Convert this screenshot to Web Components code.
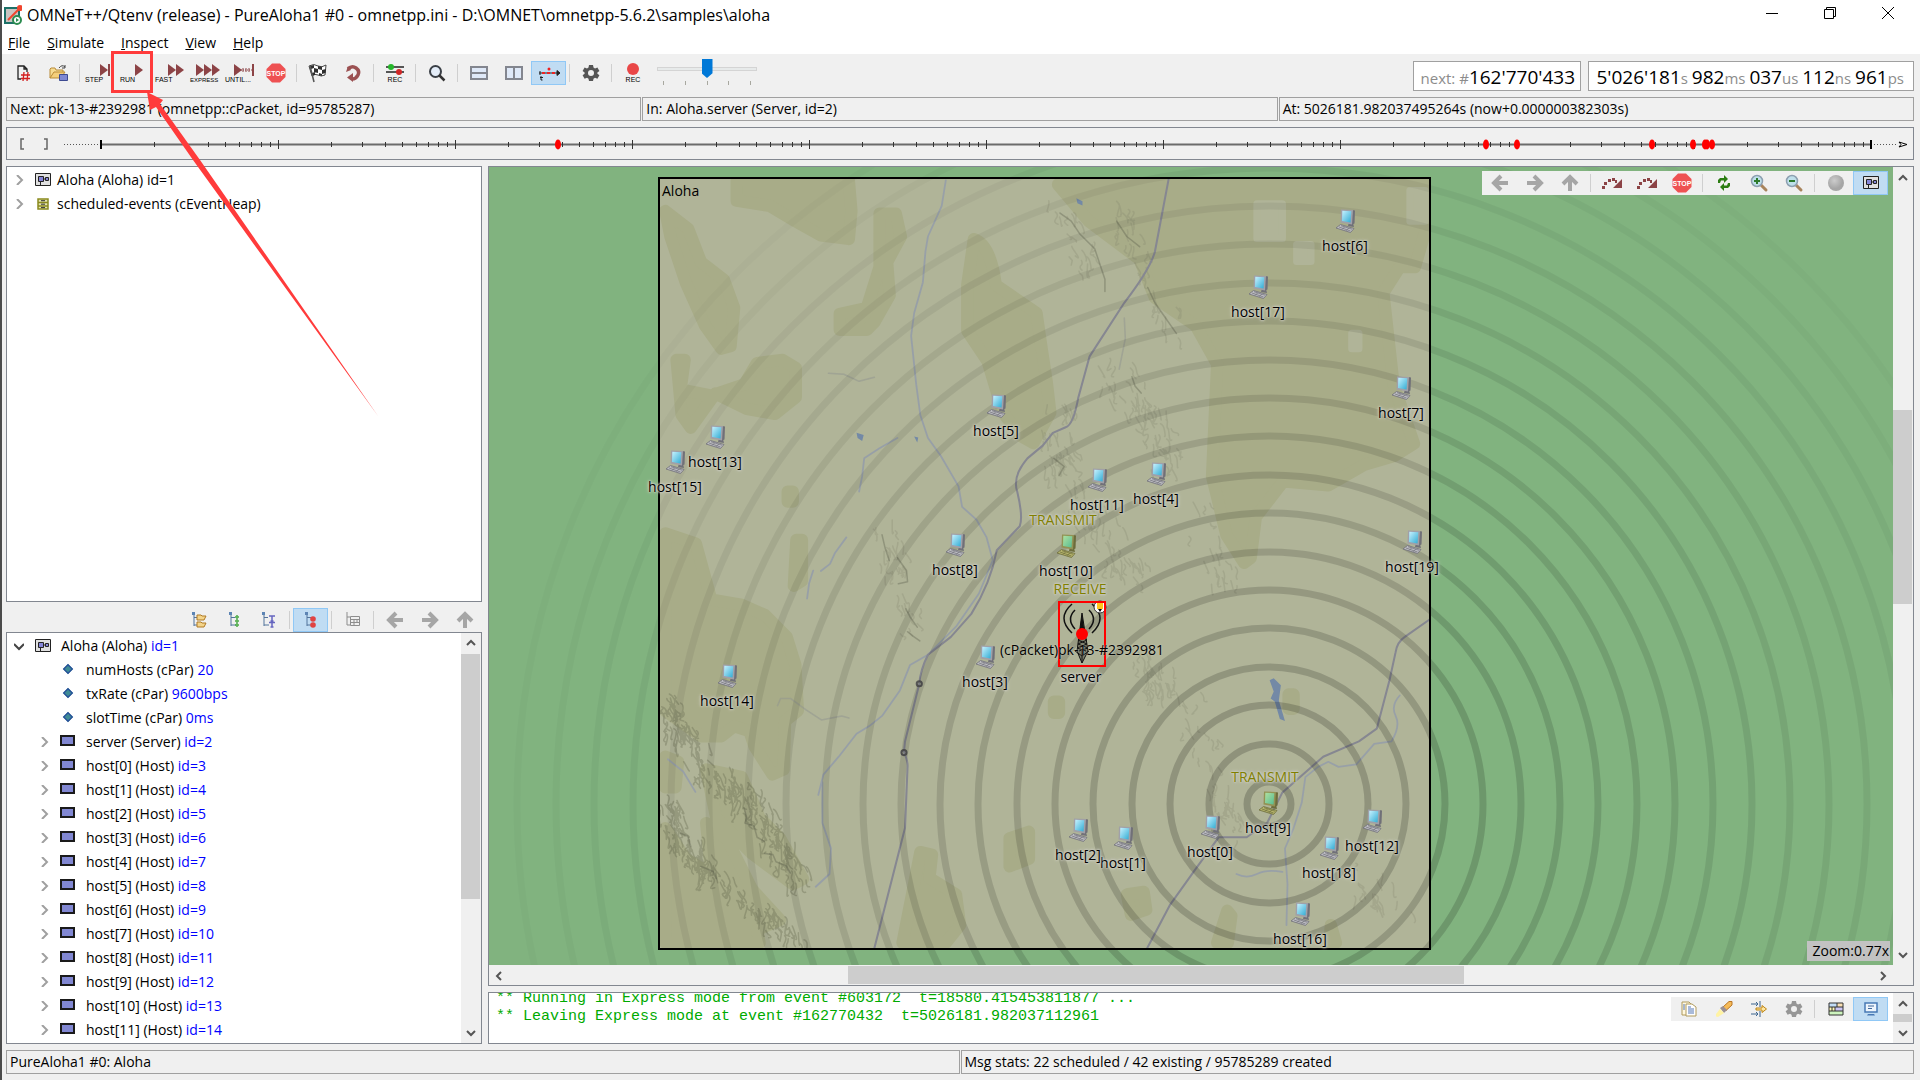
<!DOCTYPE html>
<html lang="en">
<head>
<meta charset="utf-8">
<title>OMNeT++/Qtenv (release) - PureAloha1 #0</title>
<style>
    html, body { margin: 0; height: 100% }
    body {
        font: 14px/20px "Open Sans", "Noto Sans", sans-serif;
        color: #000;
        background: #f0f0f0;
        overflow: hidden;
    }
</style>
</head>
<body>
<app-window>
    <title-bar slot="title">OMNeT++/Qtenv (release) - PureAloha1 #0 - omnetpp.ini - D:\OMNET\omnetpp-5.6.2\samples\aloha</title-bar>
    <menu-bar slot="menu" items="File,Simulate,Inspect,View,Help"></menu-bar>

    <tool-bar slot="toolbar" main>
        <tool-button icon="new" label="Set up a run"></tool-button>
        <tool-button icon="open" label="Load file"></tool-button>
        <tool-sep></tool-sep>
        <tool-button icon="step" label="Step"></tool-button>
        <tool-button icon="run" label="Run" marked></tool-button>
        <tool-button icon="fast" label="Fast run"></tool-button>
        <tool-button icon="express" label="Express run"></tool-button>
        <tool-button icon="until" label="Run until"></tool-button>
        <tool-button icon="stop" label="Stop"></tool-button>
        <tool-sep></tool-sep>
        <tool-button icon="flag" label="Conclude simulation"></tool-button>
        <tool-button icon="rebuild" label="Rebuild network"></tool-button>
        <tool-sep></tool-sep>
        <tool-button icon="eventlog" label="Eventlog recording"></tool-button>
        <tool-sep></tool-sep>
        <tool-button icon="find" label="Find objects"></tool-button>
        <tool-sep></tool-sep>
        <tool-button icon="rows" label="Horizontal layout"></tool-button>
        <tool-button icon="columns" label="Vertical layout"></tool-button>
        <tool-button icon="timeline" label="Show timeline" active></tool-button>
        <tool-sep></tool-sep>
        <tool-button icon="gear" label="Preferences"></tool-button>
        <tool-sep></tool-sep>
        <tool-button icon="record" label="Record video"></tool-button>
        <speed-slider></speed-slider>
    </tool-bar>
    <sim-clock slot="clocks" parts="next: #|162'770'433"></sim-clock>
    <sim-clock slot="clocks" wide parts="|5'026'181|s |982|ms |037|us |112|ns |961|ps"></sim-clock>

    <frame-label slot="info">Next: pk-13-#2392981 (omnetpp::cPacket, id=95785287)</frame-label>
    <frame-label slot="info">In: Aloha.server (Server, id=2)</frame-label>
    <frame-label slot="info">At: 5026181.982037495264s (now+0.000000382303s)</frame-label>

    <event-timeline slot="timeline"></event-timeline>

    <object-tree slot="objects" id="objects"></object-tree>
    <tool-bar slot="inspector-tools">
        <tool-button icon="tree-folders" label="Grouped mode"></tool-button>
        <tool-button icon="tree-flat" label="Flat mode"></tool-button>
        <tool-button icon="tree-types" label="Children mode"></tool-button>
        <tool-sep></tool-sep>
        <tool-button icon="tree-inherit" label="Inheritance mode" active></tool-button>
        <tool-sep></tool-sep>
        <tool-button icon="tree-table" label="Packet mode"></tool-button>
        <tool-sep></tool-sep>
        <tool-button icon="left" label="Back"></tool-button>
        <tool-button icon="right" label="Forward"></tool-button>
        <tool-button icon="up" label="Go to parent"></tool-button>
    </tool-bar>
    <object-tree slot="inspector" id="inspector" scroll="0,240,120"></object-tree>

    <net-canvas slot="canvas">
        <tool-bar slot="tools">
            <tool-button icon="left" label="Back"></tool-button>
            <tool-button icon="right" label="Forward"></tool-button>
            <tool-button icon="up" label="Go to parent"></tool-button>
            <tool-sep></tool-sep>
            <tool-button icon="hop" label="Run until next event"></tool-button>
            <tool-button icon="hop-fast" label="Fast run until next event"></tool-button>
            <tool-button icon="stop" label="Stop"></tool-button>
            <tool-sep></tool-sep>
            <tool-button icon="refresh" label="Re-layout"></tool-button>
            <tool-button icon="zoom-in" label="Zoom in"></tool-button>
            <tool-button icon="zoom-out" label="Zoom out"></tool-button>
            <tool-sep></tool-sep>
            <tool-button icon="sphere" label="3D view"></tool-button>
            <tool-button icon="module" label="Canvas view" active></tool-button>
        </tool-bar>
    </net-canvas>

    <log-pane slot="log">
        <span slot="text">** Running in Express mode from event #603172  t=18580.415453811877 ...</span>
        <span slot="text">** Leaving Express mode at event #162770432  t=5026181.982037112961</span>
        <tool-bar slot="tools">
            <tool-button icon="copy" label="Copy"></tool-button>
            <tool-button icon="torch" label="Find"></tool-button>
            <tool-button icon="filter" label="Filter"></tool-button>
            <tool-button icon="gear-light" label="Options"></tool-button>
            <tool-sep></tool-sep>
            <tool-button icon="messages" label="Show message view"></tool-button>
            <tool-button icon="monitor" label="Show log" active></tool-button>
        </tool-bar>
    </log-pane>

    <frame-label slot="status">PureAloha1 #0: Aloha</frame-label>
    <frame-label slot="status">Msg stats: 22 scheduled / 42 existing / 95785289 created</frame-label>
</app-window>

<script>
// **************************************************************************** helpers
let createElement = (tag, props = {}) => Object.assign(document.createElement(tag), props);
let shadow = (host, css, html = "") => {
    let root = host.attachShadow({ mode: "open" });
    root.innerHTML = `<style>*{box-sizing:border-box}${css}</style>${html}`;
    return root;
};
let svg = (w, h, body) => `<svg width="${w}" height="${h}" viewBox="0 0 ${w} ${h}" aria-hidden="true">${body}</svg>`;

// **************************************************************************** icons
let tri = (...xs) => xs.map(x => `<path d="M${x} 1l8 6-8 6z" fill="#8c4346"/>`).join("");
let caption = (text, size = 7) => `<text x="0" y="19" font-size="${size}" font-family="Liberation Sans,sans-serif">${text}</text>`;
let trunk = `<path d="M3 3v11M3 5.500h4M3 13h5" fill="none" stroke="#52749c"/><path d="M1 0h3v3H1z" fill="#5c84b4"/>`;
let gear = fill => svg(18, 18, `<path fill="${fill}" fill-rule="evenodd" d="M7 1h4l.5 2.500 1.500.9 2.400-.9 2 3.400-2 1.600v1.200l2 1.600-2 3.400-2.400-.9-1.500.9L11 17H7l-.5-2.300-1.500-.9-2.400.9-2-3.400 2-1.600V8.500l-2-1.600 2-3.400 2.400.9 1.500-.9zM9 6a3 3 0 1 0 0 6 3 3 0 0 0 0-6z"/>`);
let lens = sign => svg(18, 18, `<path d="M10 10l6 6" stroke="#a8845c" stroke-width="3" stroke-linecap="round"/><circle cx="7" cy="7" r="5.500" fill="#bfe0ea" stroke="#8d9fb0" stroke-width="1.500"/><path d="${sign}" stroke="#2c7a2c" stroke-width="2"/>`);
let moduleIcon = svg(16, 14, `<path d="M.5.500h15v12H.5z" fill="#e0e0e0" stroke="#222"/><path d="M3.500 3.500h5v5h-5zM10.500 4.500h3v3h-3zM8.500 6h2M5.500 8.500V12" fill="#8585d8" stroke="#222"/>`);
let hop = svg(22, 14, `<path d="M1 10h3v3H1zM3 6h3v3H3zM7 3h3v3H7zM11 2h3v3h-3zM14 4h2v3h-2zM21 3v9h-9z" fill="#8c4346"/>`);
let stop = svg(20, 20, `<path d="M6 .500h8l5.500 5.500v8L14 19.500H6L.500 14V6z" fill="#ee5152"/><text x="10" y="13" text-anchor="middle" font-size="7" font-weight="700" fill="#fff" font-family="Liberation Sans,sans-serif">STOP</text>`);
let navArrow = turn => svg(18, 18, `<path transform="rotate(${turn} 9 9)" d="M17 9H4M10 2L3 9l7 7" fill="none" stroke="#a6a6a6" stroke-width="4"/>`);
// screen, case and keyboard of a desktop machine
let desktop = (hi, lo, frame, side, keys) => svg(20, 24,
    `<defs><linearGradient id="s" x2="1" y2="1"><stop offset="0" stop-color="${hi}"/><stop offset="1" stop-color="${lo}"/></linearGradient></defs>
    <path d="M13 13l4 1 1 4-6-1z" fill="${side}"/>
    <path d="M16 1l3 .5-.5 13-2.500 1z" fill="${side}"/>
    <path d="M5 .500L17 1l-1 14.500L4.500 13.500z" fill="${frame}"/>
    <path d="M6.300 1.800l9 .4-.8 11.300-8.500-1.500z" fill="url(#s)"/>
    <path d="M0 19l4.500-3.500L18 19.500l-3.500 4z" fill="${keys}" stroke="${side}" stroke-width=".8"/>
    <path d="M3 18l11.500 4M5 16.700l11 3.500M6 20.500l3-3M10 21.800l3-3" stroke="${side}" stroke-width=".7"/>`);

const ICONS = {
    "new": svg(16, 18, `<path d="M5 15H2V2h6l3 3v3M8 2v3h3" fill="none" stroke="#222" stroke-width="1.300"/><path d="M8 8l-1 9M12 8l-1 9M5 11h9M5 14.500h9" stroke="#d21f1f" stroke-width="1.300"/>`),
    "open": svg(20, 18, `<path d="M1 14V5l1-1h4l1 2h7v3H6z" fill="#f6dc94" stroke="#b98b37"/><path d="M1 14L5 8h11l-4 6z" fill="#f4cf7b" stroke="#b98b37"/><path d="M10 4q3-4 6-1m0-2v3h-3" fill="none" stroke="#444"/><path d="M10.500 10.500h8v6h-8z" fill="#7f88d2" stroke="#3d4a91"/>`),
    "step": svg(32, 20, tri(15) + `<path d="M23 1h2v12h-2z" fill="#8c4346"/>` + caption("STEP")),
    "run": svg(32, 20, tri(15) + caption("RUN")),
    "fast": svg(32, 20, tri(13, 21) + caption("FAST")),
    "express": svg(32, 20, tri(6, 14, 22) + caption("EXPRESS", 6)),
    "until": svg(32, 20, tri(9) + `<path d="M16 7h13" stroke="#8c4346" stroke-dasharray="1 1"/><path d="M18 5v4M21 5v4M24 5v4" stroke="#8c4346"/><path d="M27 1h2v12h-2z" fill="#8c4346"/>` + caption("UNTIL...")),
    "stop": stop,
    "flag": svg(20, 20, `<path d="M1 3q5-3 9 0 4 2 8-1l-1 10q-4 2-7 0-4-2-6 1z" fill="#fff" stroke="#444"/><path d="M2 3l4-1v3l4 1V3l4 1v3l4-1-.5 4-3.500 1V7l-4-1v4l-4-1V5l-3 1zM4 10l3-1v3l-3 1zM11 10l3 1v2l-3-1z" fill="#2e2e2e"/><path d="M2 3l4 16" stroke="#555" stroke-width="1.500"/>`),
    "rebuild": svg(16, 18, `<path d="M3 5q4-4 8-1 4 3 2 7-2 4-6 4" fill="none" stroke="#9b5152" stroke-width="3.500"/><path d="M8 9v9l-6-4.500z" fill="#9b5152"/><path d="M1 8l2-6 3 4z" fill="#9b5152"/>`),
    "eventlog": svg(20, 20, `<path d="M1 4h18M1 9h18" stroke="#222" stroke-width="1.300"/><circle cx="6" cy="4" r="3" fill="#25b62a"/><circle cx="14" cy="9" r="3" fill="#d12626"/><text x="10" y="19" text-anchor="middle" font-size="7" font-family="Liberation Sans,sans-serif">REC</text>`),
    "find": svg(18, 18, `<circle cx="7.500" cy="7.500" r="5.500" fill="#e4edf8" stroke="#3a3f46" stroke-width="2"/><path d="M11 11l5.500 5.500" stroke="#333" stroke-width="2.500"/>`),
    "rows": svg(18, 14, `<path d="M1 1h16v12H1zM1 7h16" fill="#dfe9f8" stroke="#83868f" stroke-width="2"/>`),
    "columns": svg(18, 14, `<path d="M1 1h16v12H1zM9 1v12" fill="#dfe9f8" stroke="#83868f" stroke-width="2"/>`),
    "timeline": svg(22, 16, `<path d="M1 8h18M19 5.500v5l3-2.500zM2 6v4" stroke="#222" fill="#222"/><path d="M4 8h13" stroke="#e22" stroke-width="2" stroke-dasharray="3 2"/><circle cx="11" cy="4" r="1.500" fill="#e22"/><path d="M3 11v4h1.500M2 12.500h3" fill="none" stroke="#222"/>`),
    "gear": gear("#555"),
    "gear-light": gear("#969696"),
    "record": svg(20, 20, `<circle cx="10" cy="6" r="6" fill="#e94747"/><text x="10" y="19" text-anchor="middle" font-size="7" font-family="Liberation Sans,sans-serif">REC</text>`),
    "left": navArrow(0),
    "right": navArrow(180),
    "up": navArrow(90),
    "hop": hop,
    "hop-fast": hop,
    "refresh": svg(14, 16, `<path d="M1 8V5l2-2h4V0l4 4-4 4V5.500H4L3 8zM13 8v3l-2 2H7v3l-4-4 4-4v2.500h3L11 8z" fill="#2c7d12"/>`),
    "zoom-in": lens("M4 7h6M7 4v6"),
    "zoom-out": lens("M4 7h6"),
    "sphere": svg(18, 18, `<defs><radialGradient id="g" cx=".4" cy=".35"><stop offset="0" stop-color="#ccc"/><stop offset="1" stop-color="#a6a6a6"/></radialGradient></defs><circle cx="9" cy="9" r="8" fill="url(#g)"/>`),
    "module": moduleIcon,
    "queue": svg(12, 12, `<path d="M1 1h10v10H1zM1 4.500h10M1 8h10" fill="#e3e3b0" stroke="#8a8a1e" stroke-width="1.500"/><path d="M4 2.700h4M4 6.200h4M4 9.600h4" stroke="#333"/>`),
    "param": svg(10, 12, `<path d="M5 0l5 5-5 5-5-5z" fill="#3f8c96"/><path d="M5 .7L9.300 5 5 9.300.700 5z" fill="none" stroke="#27519a" stroke-width="1.300"/>`),
    "simple": svg(16, 14, `<path d="M1 1h13v9H1z" fill="#8187d2" stroke="#1a1a1a" stroke-width="2"/>`),
    "tree-folders": svg(16, 16, trunk + `<path d="M6 3h4l1 1h4l-2 4H6zM6 10h4l1 1h4l-2 4H6z" fill="#f4d48a" stroke="#b07a25"/>`),
    "tree-flat": svg(12, 16, trunk + `<g fill="#a6e09c" stroke="#2f9a2a"><circle cx="9" cy="5" r="1.300"/><circle cx="9" cy="9" r="1.300"/><circle cx="9" cy="13" r="1.300"/></g>`),
    "tree-types": svg(16, 16, trunk + `<path d="M8 4h6M11 4v5M9.500 9h3M8 10.500h6M11 11v4M9.500 15h3" stroke="#6666c0" stroke-width="1.500"/>`),
    "tree-inherit": svg(14, 16, trunk + `<circle cx="9" cy="7" r="2.800" fill="#e04242"/><circle cx="9" cy="13" r="2.800" fill="#e04242"/>`),
    "tree-table": svg(16, 16, `<path d="M2 0v13h3M2 5h3M5.500 4.500h9v9h-9zM5.500 7.500h9M5.500 10.500h9M9 7.500v6M12 7.500v3" fill="none" stroke="#8d8d8d"/>`),
    "copy": svg(16, 16, `<path d="M1 1h7l2 2v11H1z" fill="#fff8e0" stroke="#b09a5c"/><path d="M5 3h6l4 3v9H5z" fill="#fff" stroke="#b09a5c"/><path d="M7 6h3M7 8h6M7 10h6M7 12h6M2 4h2M2 6h2M2 8h2" stroke="#5577b5"/>`),
    "torch": svg(18, 16, `<path d="M8 6l6-5.500h3V4l-6 5.500z" fill="#f6bb58" stroke="#b97524"/><path d="M5 7l3-2 4 4-3 3z" fill="#9a9095"/><path d="M5 8l4 4-6 4-2-.5L1 13z" fill="#fff3a4"/>`),
    "filter": svg(18, 16, `<path d="M1 3h7M6 1l2 2-2 2M1 13h7M6 11l2 2-2 2M10 0v6M10 10v6" fill="none" stroke="#3d658e"/><path d="M6 7h6V4.500L16.500 8 12 11.500V9H6z" fill="#ffe7a0" stroke="#bd8312"/>`),
    "messages": svg(16, 14, `<path d="M1 1h8v4H1z" fill="#c2dcf5"/><path d="M9 1h6v4H9z" fill="#f8dfb4"/><path d="M1 5h6v4H1z" fill="#fff7b5"/><path d="M7 5h8v4H7z" fill="#cbc5f4"/><path d="M1 9h14v4H1z" fill="#cdf3bd"/><path d="M1 1h14v12H1zM1 5h14M1 9h14M9 1v4M7 5v4M4 5v4" fill="none" stroke="#333"/>`),
    "monitor": svg(14, 14, `<path d="M1 1h12v9H1z" fill="#eef5fc" stroke="#4879b5" stroke-width="1.500"/><path d="M4 4h6M4 6.500h4" stroke="#42689b"/><path d="M4 12h6l1 1.500H3z" fill="#4879b5"/>`),
    "host": desktop("#c8f2ff", "#2fabd3", "#a0a0a8", "#707078", "#bcbcc2"),
    "host-busy": desktop("#b0e0a0", "#56bd92", "#929254", "#6c6c3c", "#b5b46c"),
    "antenna": svg(48, 66, `<g fill="none" stroke="#111" stroke-width="1.500"><path d="M17 9q-9 9 0 19M14 3q-16 14 0 29M31 9q9 9 0 19M34 3q16 14 0 29"/></g><path d="M24 12l-5 38 5 12 6-12z" fill="#000" fill-opacity=".3"/><path d="M24 12l-5 38M24 12l6 38M21 34l8 5-9 4 10 4-9 3M27 34l-7 5 9 4-10 4 9 3M17 50l7 5 7-5M19 50l5 12 6-12M24 50v12" fill="none" stroke="#111"/><path d="M24 12l-3 22h6z" fill="#111"/><circle cx="42" cy="6" r="6" fill="#fff" stroke="#333"/><path d="M39 2h6v6h-6z" fill="#ffc61e"/><path d="M40 8h4l-2 3z"/><circle cx="24" cy="33" r="6" fill="red"/><path d="M1 1h46v64H1z" fill="none" stroke="red" stroke-width="2"/>`)
};

customElements.define("qt-icon", class extends HTMLElement {
    connectedCallback() {
        shadow(this, ":host{display:inline-flex;justify-content:center;align-items:center}svg{display:block;overflow:visible}",
            ICONS[this.getAttribute("name")]);
    }
});

// **************************************************************************** window frame
customElements.define("app-window", class extends HTMLElement {
    connectedCallback() {
        shadow(this,
            ":host{display:flex;flex-direction:column;gap:6px;height:100vh;padding-bottom:6px;border-left:2px solid #4b4b4b;box-sizing:border-box}" +
            "header{background:#fff;height:54px}" +
            ".tools{display:flex;justify-content:space-between;height:37px;padding:0 6px 0 4px;margin-top:-6px}" +
            ".clocks{display:flex;gap:7px;padding-top:7px}" +
            ".row{display:flex;gap:1px;margin:0 6px 0 4px}" +
            "::slotted(frame-label){flex:1}" +
            "::slotted(event-timeline){margin:0 6px 0 4px}" +
            "main{flex:1;min-height:0;display:grid;grid-template-columns:476px minmax(0,1fr);gap:6px;margin:0 6px 0 4px}" +
            "section{display:flex;flex-direction:column;min-height:0}" +
            ".views{gap:6px}" +
            '::slotted([slot="objects"]){flex:436 1 0;min-height:0}' +
            '::slotted([slot="inspector"]){flex:412 1 0;min-height:0}' +
            '::slotted([slot="inspector-tools"]){align-self:flex-end;height:30px;padding-top:6px}' +
            "::slotted(net-canvas){flex:1;min-height:0}",
            `<header><slot name="title"></slot><slot name="menu"></slot></header>
            <div class="tools"><slot name="toolbar"></slot><div class="clocks"><slot name="clocks"></slot></div></div>
            <div class="row"><slot name="info"></slot></div>
            <slot name="timeline"></slot>
            <main>
                <section><slot name="objects"></slot><slot name="inspector-tools"></slot><slot name="inspector"></slot></section>
                <section class="views"><slot name="canvas"></slot><slot name="log"></slot></section>
            </main>
            <div class="row"><slot name="status"></slot></div>
            <run-pointer></run-pointer>`);
    }
});

customElements.define("title-bar", class extends HTMLElement {
    connectedCallback() {
        let button = (label, d) => `<button aria-label="${label}">${svg(14, 14, `<path d="${d}" fill="none" stroke="#000"/>`)}</button>`;
        shadow(this,
            ":host{display:flex;align-items:center;gap:5px;height:29px;padding:0 3px 0 2px;font-size:16px}" +
            "span{flex:1;white-space:nowrap}" +
            "button{width:58px;height:28px;padding:0;border:0;background:none}",
            svg(18, 20, `<path d="M1 3h14v15H1z" fill="#c9c3c0" stroke="#1c7168" stroke-width="2"/><path d="M4 15l11-11" stroke="#f0452e" stroke-width="2"/><circle cx="16" cy="3" r="3" fill="#f0452e"/><circle cx="13" cy="15" r="4" fill="#fff" stroke="#2c8c50" stroke-width="2"/><path d="M12 13l3 2-3 2z" fill="#2c8c50"/>`) +
            "<span><slot></slot></span><div>" +
            button("Minimize", "M1 7.500h12") +
            button("Restore", "M1.500 3.500h9v9h-9zM3.500 3.500v-2h9v9h-2") +
            button("Close", "M1 1l12 12M13 1L1 13") + "</div>");
    }
});

customElements.define("menu-bar", class extends HTMLElement {
    connectedCallback() {
        shadow(this,
            ":host{display:flex;gap:17px;height:25px;padding:2px 0 0 6px;box-sizing:border-box}" +
            "button{padding:2px 0;border:0;background:none;font:inherit}",
            this.getAttribute("items").split(",").map(s => `<button><u>${s[0]}</u>${s.slice(1)}</button>`).join(""));
    }
});

// **************************************************************************** toolbars
customElements.define("tool-bar", class extends HTMLElement {
    connectedCallback() {
        shadow(this,
            ":host{display:flex;align-items:flex-start;background:#f0f0f0;height:24px;box-sizing:border-box}" +
            ":host([main]){height:37px;padding-top:7px}",
            "<slot></slot>");
        this.setAttribute("role", "toolbar");
    }
});

customElements.define("tool-sep", class extends HTMLElement {
    connectedCallback() {
        shadow(this, ":host{width:1px;height:18px;margin:3px;background:#cfcfcf}");
    }
});

customElements.define("tool-button", class extends HTMLElement {
    connectedCallback() {
        shadow(this,
            ":host{display:block;position:relative}" +
            "button{display:flex;align-items:center;justify-content:center;width:35px;height:24px;padding:0;border:1px solid transparent;background:none}" +
            ":host([active]) button{background:#c0dcf3;border-color:#90c8f6}" +
            // highlight frame drawn over the button
            ":host([marked])::after{content:'';position:absolute;left:-7px;top:-10px;width:42px;height:42px;box-sizing:border-box;border:3px solid #ff3b3b;z-index:2}",
            `<button aria-label="${this.getAttribute("label")}"><qt-icon name="${this.getAttribute("icon")}"></qt-icon></button>`);
    }
});

customElements.define("speed-slider", class extends HTMLElement {
    connectedCallback() {
        shadow(this,
            ":host{display:flex;flex-direction:column;width:107px;padding-left:7px;margin-top:-2px;box-sizing:border-box}" +
            "input{appearance:none;-webkit-appearance:none;width:100px;height:20px;margin:0;background:none}" +
            "input::-webkit-slider-runnable-track{height:4px;background:#e7eaea;border:1px solid #d4d4d4}" +
            "input::-webkit-slider-thumb{-webkit-appearance:none;width:11px;height:19px;margin-top:-9px;background:#0078d7;clip-path:polygon(0 0,100% 0,100% 75%,50% 100%,0 75%)}" +
            "div{display:flex;justify-content:space-between;padding:2px 6px}" +
            "i{width:1px;height:4px;background:#a8a8a0}",
            `<input type="range" min="0" max="100" value="50" aria-label="Animation speed"><div><i></i><i></i><i></i><i></i><i></i></div>`);
    }
});

customElements.define("sim-clock", class extends HTMLElement {
    connectedCallback() {
        // even parts are gray units, odd parts are the digits
        let parts = this.getAttribute("parts").split("|");
        shadow(this,
            ":host{display:flex;align-items:center;justify-content:flex-end;height:30px;padding:2px 5px 0;background:#fff;border:1px solid #a0a0a0;box-sizing:border-box;min-width:168px}" +
            ":host([wide]){min-width:326px;padding-right:9px}" +
            "output{font-size:19px;line-height:26px;white-space:pre}" +
            "small{font-size:15px;color:#8c8c8c}",
            `<output>${parts.map((s, i) => i % 2 ? s : s && `<small>${s}</small>`).join("")}</output>`);
    }
});

customElements.define("frame-label", class extends HTMLElement {
    connectedCallback() {
        shadow(this,
            ":host{display:block;height:24px;padding:1px 3px;border:1px solid #a0a0a0;box-sizing:border-box;white-space:nowrap;overflow:hidden}",
            "<slot></slot>");
    }
});

// **************************************************************************** <event-timeline>
customElements.define("event-timeline", class extends HTMLElement {
    connectedCallback() {
        let start = 94, decade = 177, count = 10, end = start + decade * count;
        let events = [551, 1479, 1510, 1645, 1686, 1698, 1700, 1705];
        let ticks = "";
        for (let d = 0; d < count; d++)
            for (let n = 1; n < 10; n++) {
                let x = Math.round(start + decade * (d + Math.log10(n)));
                ticks += n == 1 ? `M${x}.500 12v9` : `M${x}.500 14v5`;
            }
        shadow(this,
            ":host{display:block;height:33px;border:1px solid #828790;box-sizing:border-box}svg{display:block}",
            `<svg width="100%" height="31" viewBox="0 0 1906 31" aria-label="Timeline">
                <path d="M17 11h-3v10h3M37 11h3v10h-3" fill="none" stroke="#666" stroke-width="1.500"/>
                <path d="M57 16.500H${start}M${end} 16.500h27" stroke="#555" stroke-dasharray="1 2"/>
                <path d="M${start} 16.500H${end}" stroke="#6b6b6b" stroke-width="2"/>
                <path d="${ticks}" stroke="#333"/>
                <path d="M${start} 12v9M${end} 12v9" stroke="#000" stroke-width="2"/>
                <path d="M${end + 28} 14l8 2.500-8 2.500 2-2.500z" fill="#fff" stroke="#000"/>
                ${events.map(x => `<ellipse cx="${x}" cy="16.500" rx="3" ry="5" fill="red"/>`).join("")}
            </svg>`);
    }
});

// **************************************************************************** <scroll-bar>
customElements.define("scroll-bar", class extends HTMLElement {
    connectedCallback() {
        // before,thumb,after lengths as flex weights
        let [a, b, c] = (this.getAttribute("parts") || "1,1,1").split(",");
        let button = (label, turn) => `<button aria-label="${label}">${svg(10, 10, `<path transform="rotate(${turn} 5 5)" d="M1 7l4-4 4 4" fill="none" stroke="#555" stroke-width="2"/>`)}</button>`;
        let row = this.hasAttribute("horizontal");
        shadow(this,
            `:host{display:flex;flex-direction:${row ? "row" : "column"};${row ? "height" : "width"}:20px;background:#f0f0f0;box-sizing:border-box}` +
            "button{flex:none;display:grid;place-items:center;width:20px;height:21px;padding:0;border:0;background:none}" +
            `i{flex:${a} 1 0}b{flex:${b} 1 0;background:#cdcdcd;margin:${row ? "1px 0" : "0 1px 0 0"}}u{flex:${c} 1 0}`,
            button("Scroll back", row ? -90 : 0) + "<i></i><b></b><u></u>" + button("Scroll on", row ? 90 : 180));
    }
});

// **************************************************************************** <object-tree>
customElements.define("object-tree", class extends HTMLElement {
    set rows(rows) {
        this.list.replaceChildren(...rows.map(([level, state, icon, text, value = ""]) => {
            let arrow = state == "leaf" ? "" : `<button aria-label="Toggle">${svg(10, 10,
                `<path d="${state == "open" ? "M0 3l5 5 5-5" : "M3 0l5 5-5 5"}" fill="none" stroke="${state == "open" ? "#444" : "#a0a0a0"}" stroke-width="2"/>`)}</button>`;
            return createElement("li", {
                className: "level" + level,
                innerHTML: `<span class="arrow">${arrow}</span><qt-icon name="${icon}"></qt-icon><span class="text">${text}${value && ` <em>${value}</em>`}</span>`
            });
        }));
    }
    connectedCallback() {
        let scroll = this.getAttribute("scroll");
        this.list = shadow(this,
            ":host{display:flex;background:#fff;border:1px solid #828790;box-sizing:border-box;overflow:hidden}" +
            "ul{flex:1;margin:0;padding:1px 0 0;list-style:none;overflow:hidden}" +
            "li{display:flex;align-items:center;height:24px;padding-left:7px;white-space:nowrap}" +
            ".level1{padding-left:32px}" +
            ".arrow{width:20px;display:flex}" +
            "button{display:flex;width:10px;height:10px;padding:0;border:0;background:none}" +
            "qt-icon{width:18px}" +
            ".text{padding-left:5px}" +
            (scroll ? ".text{padding-left:9px}" : "") +
            "em{font-style:normal;color:#00f}",
            "<ul></ul>" + (scroll ? `<scroll-bar parts="${scroll}"></scroll-bar>` : "")
        ).querySelector("ul");
    }
});

document.getElementById("objects").rows = [
    [0, "closed", "module", "Aloha (Aloha) id=1"],
    [0, "closed", "queue", "scheduled-events (cEventHeap)"]
];
document.getElementById("inspector").rows = [
    [0, "open", "module", "Aloha (Aloha)", "id=1"],
    [1, "leaf", "param", "numHosts (cPar)", "20"],
    [1, "leaf", "param", "txRate (cPar)", "9600bps"],
    [1, "leaf", "param", "slotTime (cPar)", "0ms"],
    [1, "closed", "simple", "server (Server)", "id=2"],
    ...Array(12).fill().map((_, i) => [1, "closed", "simple", `host[${i}] (Host)`, `id=${i + 3}`])
];

// **************************************************************************** <net-node>
customElements.define("net-node", class extends HTMLElement {
    connectedCallback() {
        let [x, y] = this.getAttribute("at").split(",");
        let status = this.getAttribute("status");
        shadow(this,
            // zero-sized box on the node's centre, the parts hang around it
            `:host{position:absolute;left:${x}px;top:${y}px;width:0;height:0;white-space:nowrap}` +
            "qt-icon,span{position:absolute;left:0;transform:translate(-50%,-50%)}" +
            "qt-icon{top:0}" +
            "span{text-shadow:0 0 2px #cdcdc4,0 0 2px #cdcdc4,0 0 3px #cdcdc4,0 0 4px #cdcdc4}" +
            ".name{top:25px;left:-1px}" +
            ".status{top:-26px;left:-4px;color:#808000}" +
            ":host([large]) .name{top:43px}" +
            ":host([large]) .status{top:-45px;left:-2px}",
            `<qt-icon name="${this.getAttribute("icon")}"></qt-icon><span class="name"><slot></slot></span>` +
            (status ? `<span class="status">${status}</span>` : ""));
    }
});

// **************************************************************************** <terrain-map>
customElements.define("terrain-map", class extends HTMLElement {
    connectedCallback() {
        let ridge = (x, y, w, h, n, spread = 70) => { // scattered short strokes, seeded by position
            let seed = x * 7 + y, d = "";
            let rnd = () => (seed = (seed * 9301 + 49297) % 233280) / 233280;
            for (let i = 0; i < n; i++) {
                let t = rnd();
                let px = x + w * t + (rnd() - .5) * spread, py = y + h * t + (rnd() - .5) * spread;
                d += `M${px | 0} ${py | 0}q${rnd() * 8 | 0} ${2 + rnd() * 6 | 0} ${rnd() * 14 - 4 | 0} ${6 + rnd() * 12 | 0}t${rnd() * 10 - 3 | 0} ${4 + rnd() * 8 | 0}`;
            }
            return d;
        };
        shadow(this,
            ":host{display:block;position:absolute;inset:0;overflow:hidden;background:#b0b498}svg{display:block}",
            svg(773, 773, `<g transform="translate(-8 -17) scale(.51)" fill="none" stroke-linejoin="round" stroke-linecap="round">
                <g fill="#a8ac88" stroke="#a8ac88" stroke-width="24">
                    <path d="M30 100L75 135 100 200 145 235 165 290 158 365 140 370 108 325 70 240 40 150zM170 40H390L395 100 390 155 335 148 285 120 235 90 170 80z"/>
                    <path d="M450 105H482L492 150 465 200 470 265 440 318 425 333H372V302L425 290 450 210z"/>
                    <path d="M52 392H68L60 450 120 462 185 440 210 398 260 392 286 408V465L245 498 190 488 128 458 80 525 62 500z"/>
                    <path d="M635 155Q668 165 678 245L758 300 768 370 778 435 785 495 752 555 725 540 692 495 662 395 622 335V245z"/>
                    <path d="M800 48H1520V140L1500 210H1470L1438 260 1458 440 1498 556 1460 580 1400 598 1330 638 1242 630 1188 700 1178 780 1165 790 1130 735 1102 620 1112 400 1070 325 990 270 960 195 860 120z"/>
                    <path d="M287 745L298 745V825L282 835zM30 732L90 752 120 862 180 872 225 892 268 935 285 990 290 1080 265 1100 262 1195 240 1205 205 1150 195 1120 165 1110 140 1130 100 1130 30 1080zM270 650h10v20h-10z"/>
                    <path d="M110 1195L180 1210 215 1290 255 1330 300 1410 280 1420 200 1360 130 1290zM30 1170L55 1180 50 1230 30 1230zM30 1310L70 1370 120 1400 110 1300 150 1330 200 1430 255 1490 210 1510 215 1535H30z"/>
                    <path d="M495 1535L530 1357 553 1362 548 1408 600 1440 608 1500 580 1535zM705 1385V1330L743 1317V1370zM935 1440l33-5 5 35-30 10zM1112 1535L1132 1472 1140 1482 1133 1535zM1332 1535L1335 1500 1345 1535zM792 1062h10v22h-10zM1252 1048h10v28h-10z"/>
                </g>
                <path d="M1190 86h50v68h-50zM1268 166h28v33h-28zM1376 340h14v30h-14zM1490 60h30v60h-30z" fill="#b0b498" stroke="#b0b498" stroke-width="14"/>
                <g stroke="#7d7f68" stroke-width="3" opacity=".24">
                    <path d="${ridge(800, 90, 80, 140, 20, 50)}${ridge(920, 90, 110, 250, 34, 50)}"/>
                    <path d="${ridge(800, 470, 10, 140, 44)}${ridge(910, 410, 110, 180, 60)}"/>
                    <path d="${ridge(840, 660, 110, 150, 50)}${ridge(970, 980, 40, 60, 36)}"/>
                    <path d="${ridge(455, 720, 60, 200, 34, 50)}${ridge(1080, 680, 50, 150, 20)}"/>
                    <path d="${ridge(1050, 1040, 40, 180, 20)}${ridge(1110, 1240, 30, 70, 24)}${ridge(1370, 1390, 90, 90, 20)}"/>
                </g>
                <g stroke="#666a50" stroke-width="3" opacity=".36">
                    <path d="${ridge(20, 1060, 60, 70, 46, 50)}${ridge(60, 1130, 130, 130, 70, 60)}"/>
                    <path d="${ridge(180, 1220, 110, 190, 90, 50)}"/>
                    <path d="${ridge(24, 1265, 90, 130, 90, 50)}${ridge(110, 1380, 110, 110, 36, 30)}"/>
                    <path d="${ridge(240, 1470, 40, 60, 26, 60)}"/>
                </g>
                <g stroke="#555a48" stroke-width="3" opacity=".35">
                    <path d="M455 735l6 26 8 24M485 780l18 25 2 22-18 4M502 880l8 16 14 20M505 925l10 8 14 10M804 104l22 16 16 24 30 30 20 60 0 24M915 120l20 30 25 20M976 250l14 30 14 20 28 40M945 425l6 18 12 14M792 585l20 16-10 18"/>
                    <path d="M184 1270l6 20-4 10 18 6 6 22 14 8M225 1360l16 2 6 14 20 8 8 14M60 1320l14 6 6 20M100 1385l24 10 6 14"/>
                </g>
                <g stroke="#929bab" stroke-width="3.500" opacity=".8">
                    <path d="M580 40L572 90 545 150 540 180 535 240 518 300 512 345 522 440 530 500 545 545 570 580 605 640 612 680 640 705 660 740 672 785 645 850 600 915 545 970 510 990 490 1040 455 1090 430 1110 405 1125 370 1170 340 1205 330 1245M338 1220L338 1300 355 1350 352 1400 325 1425"/>
                    <path d="M1470 1050q-18 20-8 40t-8 50L1420 1145 1385 1185 1350 1190 1330 1180 1310 1190 1285 1210 1278 1260 1262 1310 1245 1350 1250 1420 1248 1500M1150 1400q20 10 40 0t50-4"/>
                    <path d="M410 650l6-30 4-35 30-20 35-20M308 860l4-30 8-25M335 806l18-14 10-22 22-30M35 1175l30 24 24 40"/>
                </g>
                <path d="M350 418l30 2 30 14 30-8M930 310l2 40-12 60M250 1070l6-14 20 0 30 22 30 20 40-8 14 4" stroke="#8f9390" stroke-width="3" opacity=".5"/>
                <path d="M1215 1020l8-4 14 14-4 30 12 40-10-4-10-34-8-6 6-14zM405 535l14 4-3 12-9-6zM836 75l12 6 0 8-10-4zM518 542l8 2-2 10z" fill="#7389a6"/>
                <g stroke="#868791" stroke-width="4">
                    <path d="M1017 37L990 180Q980 215 930 280L862 385 840 465Q830 520 815 524L790 535 770 560 740 585Q710 620 720 650 732 700 725 718L680 765Q668 830 630 890L590 935 545 970Q530 1000 528 1027L500 1140 498 1160Q506 1180 505 1190L500 1310 440 1545"/>
                    <path d="M1530 900L1480 935Q1465 945 1462 965L1450 1020 1425 1115 1390 1140 1320 1170 1240 1240 1210 1300 1170 1328H1115L1070 1390 1020 1460 975 1545"/>
                    <circle cx="528" cy="1027" r="5" stroke="#555"/><circle cx="498" cy="1162" r="5" stroke="#555"/>
                </g>
            </g>`));
    }
});

// **************************************************************************** <net-canvas>
customElements.define("net-canvas", class extends HTMLElement {
    connectedCallback() {
        let rings = "";
        for (let n = 0; n < 20; n++)
            rings += `<circle cx="611" cy="627" r="${Math.round(22 + n * 38.400)}" stroke-opacity="${(.2 * (1 - n / 21)).toFixed(3)}"/>`;
        let hosts = {
            0: "553,650", 1: "466,661", 2: "421,653", 3: "328,480", 4: "499,297", 5: "339,229", 6: "688,44",
            7: "744,211", 8: "298,368", 9: "611,626", 10: "409,369", 11: "440,303", 12: "715,644", 13: "58,260",
            14: "70,499", 15: "18,285", 16: "643,737", 17: "601,110", 18: "672,671", 19: "755,365"
        };
        let busy = [9, 10];
        shadow(this,
            ":host{display:grid;grid-template:minmax(0,1fr) 20px/minmax(0,1fr) 20px;border:1px solid #828790;background:#f0f0f0;box-sizing:border-box}" +
            ".view{position:relative;overflow:hidden;background:#81b37f;padding:10px 0 0 169px}" +
            ".net{position:relative;width:773px;height:773px}" +
            ".net::before{content:'';position:absolute;inset:0;border:2px solid #000;z-index:1}" +
            ".rings{position:absolute;inset:0;overflow:visible;fill:none;stroke:#000;stroke-width:7;z-index:1}" +
            "net-node,.title,.packet{z-index:2}" +
            ".title{position:absolute;left:4px;top:4px}" +
            ".packet{position:absolute;left:424px;top:463px;width:0;display:flex;justify-content:center;white-space:nowrap;text-shadow:0 0 2px #cfcfc0}" +
            "::slotted(tool-bar){position:absolute;right:5px;top:4px;z-index:3}" +
            ".zoom{position:absolute;right:3px;bottom:4px;z-index:3;padding:0 1px 0 5px;background:#c2c2c2}",
            `<div class="view">
                <div class="net">
                    <terrain-map></terrain-map>
                    <svg class="rings" width="773" height="773">${rings}</svg>
                    <span class="title">Aloha</span>
                    ${Object.entries(hosts).map(([nr, at]) =>
                        `<net-node at="${at}" icon="host${busy.includes(+nr) ? '-busy" status="TRANSMIT' : ""}">host[${nr}]</net-node>`).join("")}
                    <net-node at="424,457" icon="antenna" status="RECEIVE" large>server</net-node>
                    <span class="packet">(cPacket)pk-13-#2392981</span>
                </div>
                <slot name="tools"></slot>
                <span class="zoom">Zoom:0.77x</span>
            </div>
            <scroll-bar parts="222,194,340"></scroll-bar>
            <scroll-bar horizontal parts="338,616,408"></scroll-bar>`);
    }
});

// **************************************************************************** <log-pane>
customElements.define("log-pane", class extends HTMLElement {
    connectedCallback() {
        shadow(this,
            ":host{position:relative;display:flex;height:52px;background:#fff;border:1px solid #828790;box-sizing:border-box;overflow:hidden}" +
            "div{flex:1;margin-top:-3px;padding-left:7px;font:15px/18px 'Liberation Mono',monospace;color:#00aa00;white-space:pre}" +
            "::slotted(span){display:block}" +
            "::slotted(tool-bar){position:absolute;right:25px;top:4px}",
            `<div><slot name="text"></slot></div><slot name="tools"></slot><scroll-bar parts="0,1,0"></scroll-bar>`);
    }
});

// **************************************************************************** <run-pointer>
// arrow that points at the Run button
customElements.define("run-pointer", class extends HTMLElement {
    connectedCallback() {
        shadow(this, ":host{position:absolute;left:0;top:0;pointer-events:none;z-index:5}svg{display:block}",
            svg(400, 420, `<path d="M147 92L163 100 160 104 200 160 378 416 193 160 156 107 150 110z" fill="#ff3b3b"/>`));
    }
});
</script>
</body>
</html>
